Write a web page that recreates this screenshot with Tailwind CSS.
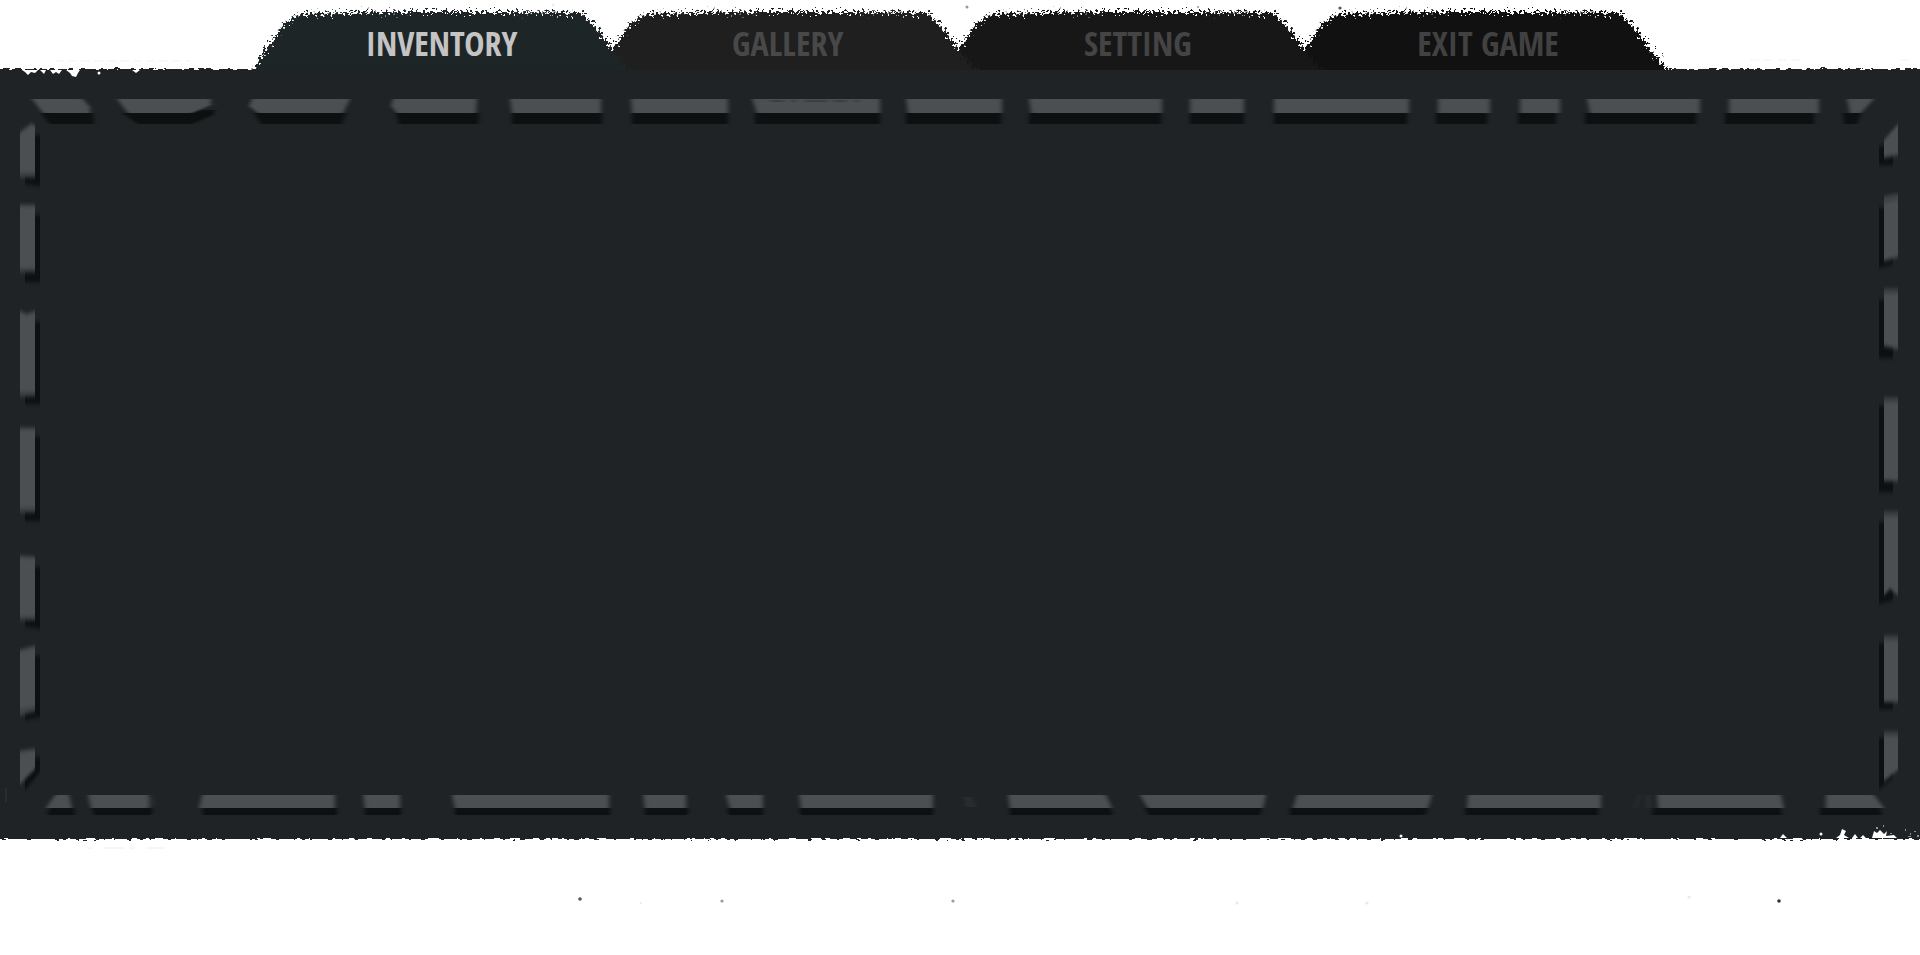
<!DOCTYPE html>
<html lang="en">
<head>
<meta charset="utf-8">
<meta name="viewport" content="width=device-width, initial-scale=1">
<title>Inventory</title>
<script src="https://cdn.jsdelivr.net/npm/@tailwindcss/browser@4"></script>
</head>
<body class="flex min-h-screen flex-col overflow-x-hidden bg-white font-['Open_Sans_Condensed','Roboto_Condensed','Liberation_Sans_Narrow','Liberation_Sans',sans-serif]">

<!-- Shared filters and the tab outline -->
<svg class="absolute size-0" aria-hidden="true">
  <defs>
    <filter id="torn" x="-5%" y="-20%" width="110%" height="140%" color-interpolation-filters="sRGB">
      <feTurbulence type="fractalNoise" baseFrequency="0.4" numOctaves="3" seed="4" result="n"/>
      <feDisplacementMap in="SourceGraphic" in2="n" scale="18" xChannelSelector="R" yChannelSelector="G"/>
    </filter>
    <filter id="frayed" filterUnits="userSpaceOnUse" x="-10" y="-10" width="1940" height="790" color-interpolation-filters="sRGB">
      <feTurbulence type="fractalNoise" baseFrequency="0.15 0.4" numOctaves="2" seed="9" result="n"/>
      <feDisplacementMap in="SourceGraphic" in2="n" scale="6" xChannelSelector="R" yChannelSelector="G"/>
    </filter>
    <filter id="softX" filterUnits="userSpaceOnUse" x="0" y="0" width="1920" height="768" color-interpolation-filters="sRGB"><feGaussianBlur stdDeviation="2 0"/></filter>
    <filter id="softY" filterUnits="userSpaceOnUse" x="0" y="0" width="1920" height="768" color-interpolation-filters="sRGB"><feGaussianBlur stdDeviation="0 2"/></filter>
    <symbol id="tab" viewBox="0 0 379 70" preserveAspectRatio="none" overflow="visible">
      <path filter="url(#torn)" d="M-2 78 L0 65 L14 43 L28 24 L45 14 L90 13 L160 12 L250 12 L326 13 L338 25 L356 49 L369 64 L381 78Z"/>
    </symbol>
  </defs>
</svg>

<header class="relative h-[70px] shrink-0">
  <svg class="absolute inset-0 size-full" viewBox="0 0 1920 70" preserveAspectRatio="none" aria-hidden="true">
    <g fill="#999"><circle cx="967" cy="7" r="1.5"/><circle cx="1198" cy="7" r="1"/><circle cx="1340" cy="8" r="1.6" fill="#555"/><circle cx="553" cy="5" r="1.5" fill="#eee"/></g>
    <path d="M55 61H190M1750 60H1772M1778 60H1805M1900 60H1910" stroke="#f3f3f3" stroke-dasharray="9 4"/>
  </svg>
  <nav class="relative flex h-full pl-[13.33%]" role="tablist" aria-label="Game menu">
    <button type="button" role="tab" id="tab-inventory" aria-selected="true" aria-controls="panel" class="relative z-40 -mr-[2%] h-full w-[22.8%] shrink-0 cursor-pointer text-[#c4c4c4]">
      <svg class="absolute inset-0 size-full overflow-visible text-[#1e2527]" fill="currentColor" aria-hidden="true"><use href="#tab" width="100%" height="100%"/></svg>
      <span class="relative block pt-4 pr-2 text-[34px] leading-[54px] font-bold">INVENTORY</span>
    </button>
    <button type="button" role="tab" aria-selected="false" aria-controls="panel" class="relative z-30 -mr-[2%] h-full w-[22.8%] shrink-0 cursor-pointer text-[#484848]">
      <svg class="absolute inset-0 size-full overflow-visible text-[#1f1f1f]" fill="currentColor" aria-hidden="true"><use href="#tab" width="100%" height="100%"/></svg>
      <span class="relative block pt-4 pr-2 text-[34px] leading-[54px] font-bold">GALLERY</span>
    </button>
    <button type="button" role="tab" aria-selected="false" aria-controls="panel" class="relative z-20 -mr-[2%] h-full w-[22.8%] shrink-0 cursor-pointer text-[#444444]">
      <svg class="absolute inset-0 size-full overflow-visible text-[#171717]" fill="currentColor" aria-hidden="true"><use href="#tab" width="100%" height="100%"/></svg>
      <span class="relative block pt-4 text-[34px] leading-[54px] font-bold">SETTING</span>
    </button>
    <button type="button" role="tab" aria-selected="false" aria-controls="panel" class="relative z-10 h-full w-[22.8%] shrink-0 cursor-pointer text-[#414141]">
      <svg class="absolute inset-0 size-full overflow-visible text-[#111111]" fill="currentColor" aria-hidden="true"><use href="#tab" width="100%" height="100%"/></svg>
      <span class="relative block pt-4 pl-2 text-[34px] leading-[54px] font-bold">EXIT GAME</span>
    </button>
  </nav>
</header>

<main id="panel" role="tabpanel" aria-labelledby="tab-inventory" class="relative z-50 min-h-96 flex-1 bg-[#1f2326]">
  <svg class="absolute inset-0 size-full overflow-visible" viewBox="0 0 1920 768" preserveAspectRatio="none" aria-hidden="true">
    <!-- Frayed upper and lower edges -->
    <g filter="url(#frayed)" stroke="#1f2326" stroke-width="4" fill="none">
      <path d="M-5 1H258M1668 1H1925M-5 767H1925"/>
    </g>
    <g fill="#fff">
      <path d="M22 0h16l-3 3-4-1-3 3-3-3zM40 0h6l-2 4zM50 0h12l-3 4-3-2-3 2zM66 0h14l-2 3-2 4-4-1-2-3zM132 0h8l-4 3z"/><circle cx="99" cy="3" r="1.5"/>
      <path d="M1780 768l3-4 4 4zM1836 768l4-3 2-6 4 2-2 4 5 3zM1852 768l3-4 3 4zM1860 768l3-3 3 3zM1872 768l2-7 3 2 3-3 4 4 3-3-1 5 8-1 3 3z"/><circle cx="1821" cy="764" r="1.5"/><circle cx="1401" cy="766" r="1.5"/>
      <path d="M1876 757h2v2h-2zM1883 755h1v2h-1zM1890 763h2v1h-2zM1905 759h1v2h-1zM1910 763h1v2h-1zM1914 761h2v1h-2zM1917 765h2v2h-2zM1908 766h3v1h-3z" opacity=".5"/>
    </g>
    <!-- Horizontal stitches: shadows, then thread -->
    <g filter="url(#softX)">
      <path fill="#0d1011" d="M41 43H93L94 54H50ZM122 43H192L202 40H215L213 45L192 54H138ZM254 43H346L342 54H261ZM396 43H479L478 54H399ZM512 43H602V54H512ZM632 43H728V54H632ZM755 43H880V54H755ZM906 43H1001V54H906ZM1029 43H1161V54H1029ZM1190 43H1244V54H1190ZM1274 43H1407V54H1274ZM1436 43H1487V54H1436ZM1518 43H1556V54H1518ZM1585 43H1696V54H1585ZM1725 43H1814V54H1725ZM1843 43H1861L1857 54H1844Z
        M50 738H74L75 745H47ZM92 738H152V745H94ZM203 738H337V745H203ZM365 738H401V745H365ZM455 738H610V745H455ZM645 738H688V745H645ZM728 738H763V745H728ZM800 738H933V745H800ZM1010 738H1110L1113 745H1010ZM1145 738H1262L1260 745H1148ZM1290 738H1428L1425 745H1290ZM1465 738H1598V745H1465ZM1653 738H1780L1782 745H1652ZM1820 738H1880L1882 745H1820Z"/>
      <path fill="#4b4f52" d="M32 29H83L90 37V43H43ZM117 29H211V35L192 43H128ZM252 29H350L343 43H258L249 36ZM393 29H477L476 43H397L391 36ZM510 29H601V43H512ZM631 29H728V43H632ZM752 29H880V43H757ZM906 29H1002V43H908ZM1029 29H1162V43H1031ZM1190 29H1244V43H1190ZM1274 29H1409V43H1274ZM1438 29H1490V43H1438ZM1520 29H1560V43H1520ZM1587 29H1700V43H1590ZM1729 29H1819V43H1729ZM1847 29H1874L1861 43H1850Z
        M55 725H69L72 738H46ZM88 725H149V738H91ZM202 725H335V738H199ZM363 725H400V738H365ZM452 725H609V738H455ZM643 725H686V738H645ZM726 725H763V738H730ZM799 725H933V738H801ZM1008 725H1106L1112 738H1010ZM1140 725H1266L1263 738H1148ZM1297 725H1432L1428 738H1293ZM1468 725H1601V738H1467ZM1657 725H1781L1784 738H1658ZM1826 725H1874L1884 738H1826Z"/>
      <path fill="#282d30" d="M150 727h4v10h-4zM963 727h10l3 10h-10zM1634 738l4-13h3l-4 13zM1646 725h5v13h-5z"/>
      <path stroke="#3a3f42" stroke-width="2" stroke-dasharray="14 7 5 9 22 6" d="M770 31H868"/>
    </g>
    <!-- Vertical stitches -->
    <g filter="url(#softY)">
      <path fill="#0d1011" d="M25 65H40V116L25 114ZM25 145H40V212H25ZM25 252H40V334H25ZM25 367H40V451H25ZM25 497H40V559L25 556ZM25 586H40V647L25 650ZM25 690L40 687V702L25 720Z
        M1879 76H1893V95H1879ZM1879 138H1893V194L1879 198ZM1879 230H1893V288H1879ZM1879 336H1893V422H1879ZM1879 452H1893V530L1879 534ZM1879 573H1893V639H1879ZM1879 668H1893V708L1879 719Z"/>
      <path fill="#4b4f52" d="M20 62L31 54L35 55V107H20ZM20 135H35V202H20ZM20 241L27 244L35 241V326H20ZM20 358H35V442H20ZM20 486L35 487V550H20ZM20 580L35 576V641L20 645ZM20 681L35 679V699L20 714Z
        M1898 54V85L1884 88V70ZM1884 127L1898 124V187L1884 191ZM1884 219H1898V279L1884 276ZM1884 328H1898V411H1884ZM1884 442H1898V525L1890 519L1884 525ZM1884 566H1898V632H1884ZM1884 662H1898V700L1884 711Z"/>
      <path stroke="#303538" stroke-width="2" d="M20 104H35M20 200H35M20 323H35M20 439H35M20 548H35M20 641L35 638M1884 131L1898 128M1884 222H1898M1884 331H1898M1884 445H1898M1884 569H1898M1884 665H1898"/>
    </g>
    <path d="M6 718v14" stroke="#34393c"/>
  </svg>
</main>

<footer class="h-[117px] shrink-0">
  <svg class="size-full" viewBox="0 0 1920 117" preserveAspectRatio="none" aria-hidden="true">
    <path d="M87 10H165" stroke="#eee" stroke-dasharray="6 11 20 5"/>
    <g fill="#9a9a9a"><circle cx="580" cy="61" r="1.8" fill="#555"/><circle cx="722" cy="63" r="1.6"/><circle cx="953" cy="63" r="1.6"/><circle cx="1779" cy="63" r="1.8" fill="#333"/></g>
    <g fill="#e8e8e8"><circle cx="641" cy="65" r="1"/><circle cx="1237" cy="65" r="1.5"/><circle cx="1367" cy="65" r="1.5"/><circle cx="1689" cy="59" r="1.5"/></g>
  </svg>
</footer>
</body>
</html>
